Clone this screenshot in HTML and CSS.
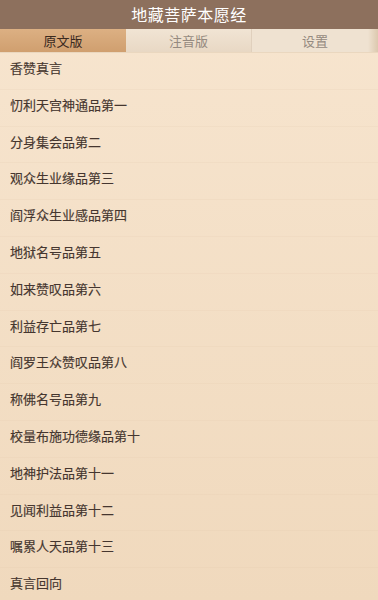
FILE: index.html
```html
<!DOCTYPE html>
<html lang="zh">
<head>
<meta charset="utf-8">
<link rel="stylesheet" href="styles.css">
</head>
<body>
<div class="app">
  <header class="titlebar">地藏菩萨本愿经</header>
  <nav class="tabs">
    <div class="tab active">原文版</div>
    <div class="tab">注音版</div>
    <div class="tab last">设置</div>
  </nav>
  <ul class="list">
    <li>香赞真言</li>
    <li>忉利天宫神通品第一</li>
    <li>分身集会品第二</li>
    <li>观众生业缘品第三</li>
    <li>阎浮众生业感品第四</li>
    <li>地狱名号品第五</li>
    <li>如来赞叹品第六</li>
    <li>利益存亡品第七</li>
    <li>阎罗王众赞叹品第八</li>
    <li>称佛名号品第九</li>
    <li>校量布施功德缘品第十</li>
    <li>地神护法品第十一</li>
    <li>见闻利益品第十二</li>
    <li>嘱累人天品第十三</li>
    <li>真言回向</li>
  </ul>
</div>
</body>
</html>
```
FILE: styles.css
```css
* { box-sizing: border-box; }
html, body { margin: 0; padding: 0; }
body {
  width: 378px;
  height: 600px;
  overflow: hidden;
  font-family: "Noto Sans CJK SC", "Noto Sans", sans-serif;
  background: linear-gradient(#f7e5cf, #f0d9bd);
}
.app { display: flex; flex-direction: column; }
.titlebar {
  height: 29px;
  background: #8d705d;
  color: #fff;
  font-size: 16px;
  line-height: 29px;
  text-align: center;
  letter-spacing: 0.5px;
}
.tabs {
  height: 24px;
  display: grid;
  grid-template-columns: 126px 126px 126px;
  background: linear-gradient(#f1e4d4, #e8d8c4);
  border-bottom: 1px solid #ead7bf;
}
.tab {
  font-size: 13px;
  line-height: 23px;
  text-align: center;
  color: #958a80;
  border-right: 1px solid #e0d0bd;
}
.tab.last {
  border-right: none;
  background: linear-gradient(90deg, #efe2d1 92%, #dcc8ae 100%);
}
.tab.active {
  background: linear-gradient(#dcb083, #d09f6f);
  color: #3b2a1f;
  border-right: none;
}
.list {
  list-style: none;
  margin: 0;
  padding: 0;
}
.list li {
  height: 36.8px;
  line-height: 30px;
  padding-left: 10px;
  font-size: 13px;
  color: #45362f;
  -webkit-text-stroke: 0.15px #45362f;
  border-bottom: 1px solid rgba(225, 200, 170, 0.18);
}
```
